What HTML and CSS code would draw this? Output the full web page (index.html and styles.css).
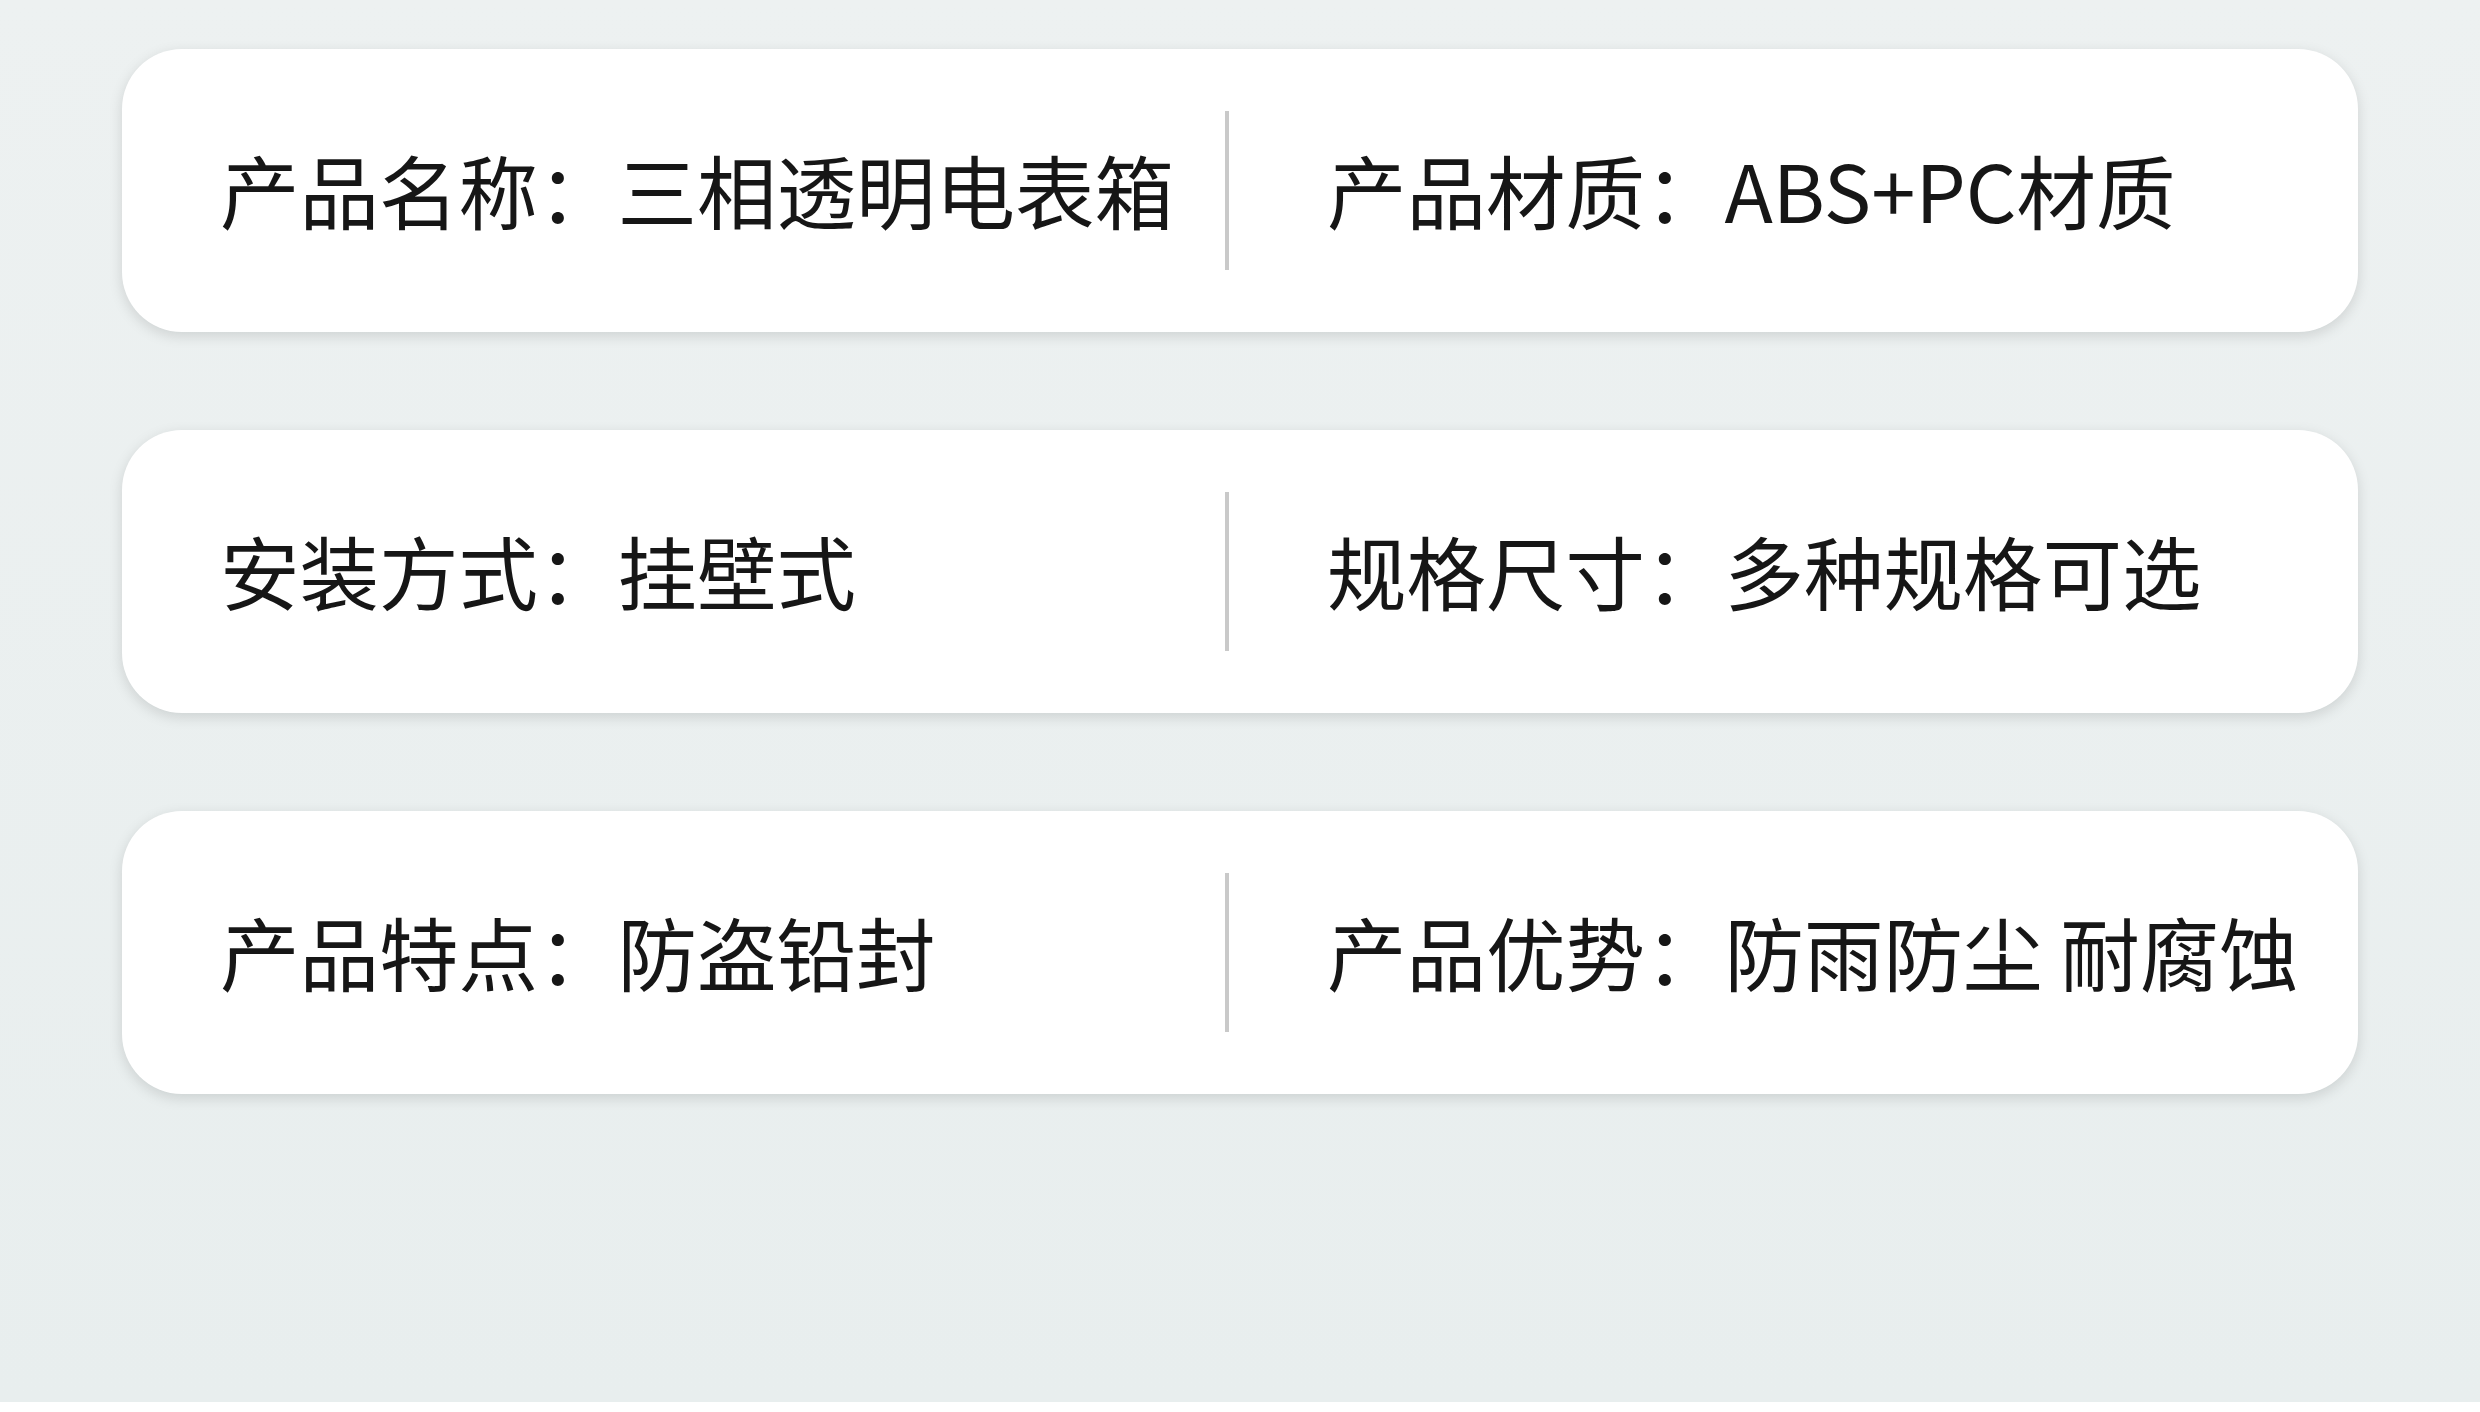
FILE: index.html
```html
<!DOCTYPE html>
<html lang="zh-CN">
<head>
<meta charset="utf-8">
<title>产品参数</title>
<link rel="stylesheet" href="styles.css">
</head>
<body>
<main class="page">
  <section class="card">
    <div class="cell">产品名称：三相透明电表箱</div>
    <div class="divider"></div>
    <div class="cell cell-right">产品材质：ABS+PC材质</div>
  </section>
  <section class="card">
    <div class="cell">安装方式：挂壁式</div>
    <div class="divider"></div>
    <div class="cell cell-right">规格尺寸：多种规格可选</div>
  </section>
  <section class="card">
    <div class="cell">产品特点：防盗铅封</div>
    <div class="divider"></div>
    <div class="cell cell-right">产品优势：防雨防尘 耐腐蚀</div>
  </section>
</main>
</body>
</html>
```
FILE: styles.css
```css
html, body {
  margin: 0;
  padding: 0;
  background: #ffffff;
}
body {
  width: 2480px;
  height: 1412px;
  overflow: hidden;
  font-family: "Noto Sans CJK SC", "Noto Sans", sans-serif;
}
.page {
  height: 1402px;
  box-sizing: border-box;
  padding: 49px 122px 0 122px;
  background: linear-gradient(180deg, #edf1f1 0%, #e8eeee 100%);
  display: flex;
  flex-direction: column;
  gap: 98px;
}
.card {
  height: 283px;
  background: #ffffff;
  border-radius: 60px;
  box-shadow: 0 4px 14px rgba(0, 0, 0, 0.13);
  display: grid;
  grid-template-columns: 1005px 4px 1fr;
  align-items: center;
  padding-left: 98px;
}
.cell {
  font-size: 79.5px;
  line-height: 1;
  color: #161616;
  white-space: nowrap;
  padding-bottom: 4px;
}
.cell-right {
  padding-left: 98px;
}
.divider {
  width: 4px;
  height: 159px;
  background: #c9c9c9;
}
```
